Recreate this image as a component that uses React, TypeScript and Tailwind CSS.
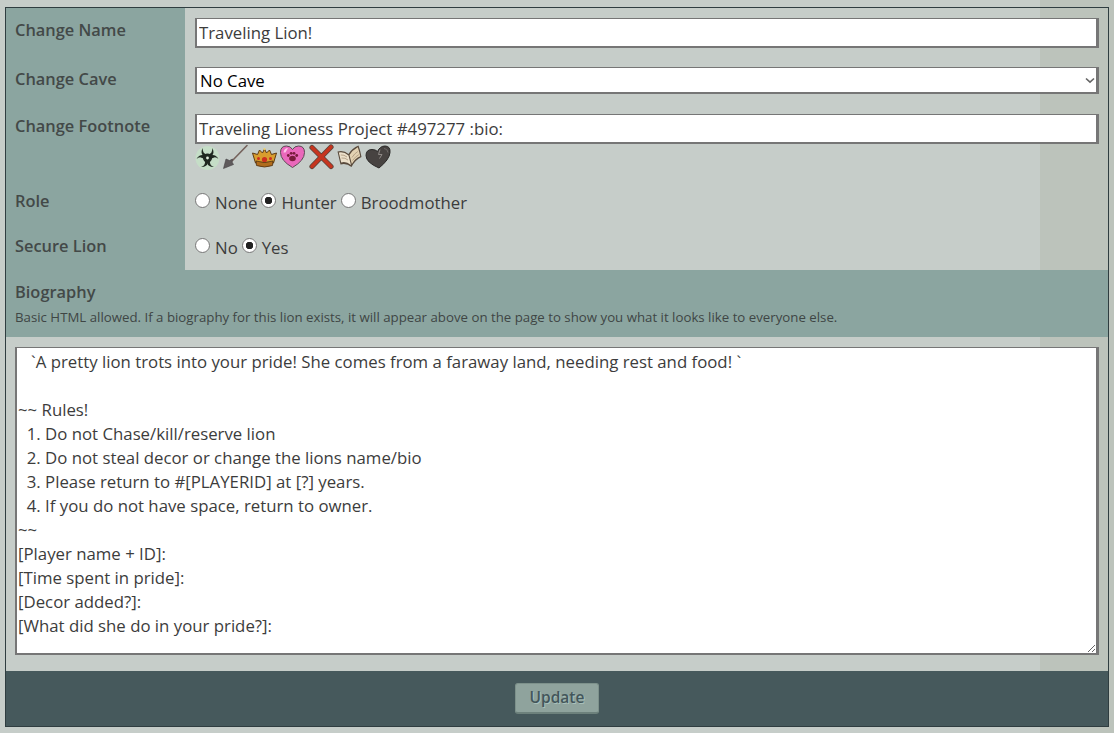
import React from 'react';

const font = { fontFamily: '"Open Sans", sans-serif' };

const bio = `   \`A pretty lion trots into your pride! She comes from a faraway land, needing rest and food! \`

~~ Rules!
  1. Do not Chase/kill/reserve lion
  2. Do not steal decor or change the lions name/bio
  3. Please return to #[PLAYERID] at [?] years.
  4. If you do not have space, return to owner.
~~
[Player name + ID]:
[Time spent in pride]:
[Decor added?]:
[What did she do in your pride?]:`;

const Bio = () => (
    <svg width="25" height="26" viewBox="0 0 25 26">
        <circle cx="12.500" cy="14" r="12" fill="#c4e6c6" opacity="0.65" />
        {[0, 120, 240].map((a) => (
            <path
                key={a}
                transform={`rotate(${a} 12.500 14)`}
                d="M8 4 A6 6 0 1 0 17 4 A4.800 4.800 0 1 1 8 4Z"
                fill="#1f2820"
            />
        ))}
        <circle cx="12.500" cy="14" r="3.800" fill="none" stroke="#1f2820" strokeWidth="1.400" />
        <circle cx="12.500" cy="14" r="1.400" fill="#e3f0e0" />
    </svg>
);

const Spear = () => (
    <svg width="25" height="26" viewBox="0 0 25 26">
        <path d="M9 17 L24 1.500" stroke="#75625c" strokeWidth="1.600" strokeLinecap="round" />
        <path d="M0.500 24.500 L3 15 L6.500 16.500 L9.500 15 L9 18 L10.500 20.500 Z" fill="#5f5a5c" stroke="#454144" strokeWidth="0.600" />
    </svg>
);

const Crown = () => (
    <svg width="25" height="26" viewBox="0 0 25 26">
        <path d="M3.500 19 L0.500 9 L5.500 10.500 L7.500 6 L10.500 9 L12.500 5 L14.500 9 L17.500 6 L19.500 10.500 L24.500 9 L21.500 19 Z" fill="#d89d2e" stroke="#5e3a12" strokeWidth="1" />
        <path d="M4 17 Q12.500 20 21 17 L20.500 21.500 Q12.500 24.500 4.500 21.500Z" fill="#b06c1c" stroke="#4e2f10" strokeWidth="0.800" />
        <circle cx="12.500" cy="15.500" r="2.600" fill="#cc2f1f" />
        <circle cx="6.500" cy="14.500" r="1.500" fill="#cc2f1f" />
        <circle cx="18.500" cy="14.500" r="1.500" fill="#cc2f1f" />
        <circle cx="12.500" cy="5" r="1.100" fill="#f2d36b" />
    </svg>
);

const Heart = () => (
    <svg width="25" height="26" viewBox="0 0 25 26">
        <path d="M12.500 23.500 Q0.500 16.500 0.500 8.500 Q0.500 2 6.500 2 Q10.500 2 12.500 5.500 Q14.500 2 18.500 2 Q24.500 2 24.500 8.500 Q24.500 16.500 12.500 23.500Z" fill="#ea68bb" stroke="#5c4a54" strokeWidth="1" />
        <path d="M3.500 8.500 Q4 4 8 4 L5.500 8.500Z" fill="#fcc6e8" />
        <ellipse cx="12.500" cy="14.500" rx="3.300" ry="2.800" fill="#7a1c3c" />
        <circle cx="8.300" cy="11.500" r="1.400" fill="#7a1c3c" />
        <circle cx="11.200" cy="9.300" r="1.400" fill="#7a1c3c" />
        <circle cx="14" cy="9.300" r="1.400" fill="#7a1c3c" />
        <circle cx="16.700" cy="11.500" r="1.400" fill="#7a1c3c" />
    </svg>
);

const Cross = () => (
    <svg width="25" height="26" viewBox="0 0 25 26">
        <path d="M3 3.500 L22 22.500 M22 3 L3 22.500" stroke="#5a453c" strokeWidth="5.200" strokeLinecap="round" />
        <path d="M3 3.500 L22 22.500 M22 3 L3 22.500" stroke="#c6351f" strokeWidth="3.600" strokeLinecap="round" />
    </svg>
);

const Book = () => (
    <svg width="25" height="26" viewBox="0 0 25 26">
        <path d="M0.500 7.500 Q7 6 11.500 10 Q15 4 21.500 1.500 Q23.500 7 24.500 13 Q18 16 14.500 23 Q9 18.500 3.500 20.500Z" fill="#5a4b3d" />
        <path d="M1.800 8.500 Q7 7.500 11.500 11.500 L14 21 Q9 17 4.200 18.500Z" fill="#ece0ca" />
        <path d="M12.500 11 Q15.500 6 20.800 3.200 Q22.300 7.500 23.200 12.300 Q18 14.500 14.800 20Z" fill="#e3d2b2" />
        <path d="M15 13.500 Q17.500 9.500 20.800 7.500 M15.500 16.500 Q18.500 12.500 21.800 10.700 M3.800 11 Q7 10.500 10 13 M4.500 14 Q8 13.500 11 16" stroke="#a8947a" strokeWidth="0.800" fill="none" />
    </svg>
);

const BrokenHeart = () => (
    <svg width="26" height="26" viewBox="0 0 26 26">
        <path d="M14 24 Q1 18.500 1 11.500 Q1 5.500 7 5.500 Q10.500 5.500 12.500 7.500 Q15 2 20 2 Q25.500 2 25 8.500 Q24.500 15.500 14 24Z" fill="#474341" stroke="#2a2827" strokeWidth="1" />
        <path d="M15 5.500 L13.500 10.500 L17 10.500 L14.500 14.500" stroke="#8f8a87" strokeWidth="1" fill="none" />
        <path d="M19 4.500 Q22.500 4.500 23 8.500" stroke="#6f6b69" strokeWidth="1" fill="none" />
    </svg>
);

const radio =
    "appearance-none w-[15px] h-[15px] rounded-full border border-[#767676] bg-white checked:bg-[radial-gradient(circle,#222_0,#222_3.5px,#fff_4px)] relative top-[-3px]";

const labelCell = "-mt-[10px] w-[179px] shrink-0 bg-[#8ba5a0] pl-[9px] text-[16.4px] font-semibold leading-[24px] text-[#434948]";

const Row = ({ label, rowClass, labelClass = "pt-[10px]", children }: { label: string; rowClass: string; labelClass?: string; children: React.ReactNode }) => (
    <div className={`flex pt-[10px] ${rowClass}`}>
        <div className={`${labelCell} ${labelClass}`}>{label}</div>
        <div className="flex-1 pl-[10px] pr-[9px]">{children}</div>
    </div>
);

const textInput =
    "block h-[30px] w-full border-2 border-[#767676] border-r-[3px] border-t-[1px] bg-white px-[2px] text-[16.8px] text-[#3c3c3c] outline-none";

export default function App() {
    return (
        <div
            style={font}
            className="h-[733px] w-[1114px] overflow-hidden bg-[linear-gradient(to_right,#c6cdc9_1040px,#bcc3bb_1040px)] px-[5px] pt-[7px]"
        >
            <div className="h-[720px] border border-[#2f3d40] text-[#3c3c3c]">
                <Row label="Change Name" rowClass="h-[49px]">
                    <input className={textInput} defaultValue="Traveling Lion!" />
                </Row>
                <Row label="Change Cave" rowClass="h-[47px]">
                    <div className="relative">
                        <select className="block h-[27px] w-full appearance-none border-2 border-[#767676] border-r-[3px] border-t-[1px] bg-white pl-[3px] text-[16.8px] text-black outline-none">
                            <option>No Cave</option>
                        </select>
                        <svg className="absolute right-[4px] top-[10px]" width="10" height="7" viewBox="0 0 10 7">
                            <path d="M1 1.500 L5 5.200 L9 1.500" stroke="#666" strokeWidth="1.600" fill="none" />
                        </svg>
                    </div>
                </Row>
                <Row label="Change Footnote" rowClass="h-[76px]">
                    <input className={textInput} defaultValue="Traveling Lioness Project #497277 :bio:" />
                    <div className="flex items-center gap-[3.400px]">
                        <Bio />
                        <Spear />
                        <Crown />
                        <Heart />
                        <Cross />
                        <Book />
                        <BrokenHeart />
                    </div>
                </Row>
                <Row label="Role" rowClass="h-[45px]" labelClass="pt-[9px]">
                    <div className="flex items-center gap-[4px] pt-[1px] text-[16.8px] leading-[24px]">
                        <input type="radio" name="role" className={radio} />
                        <span className="pl-[1px]">None</span>
                        <input type="radio" name="role" defaultChecked className={radio} />
                        <span className="pl-[1px]">Hunter</span>
                        <input type="radio" name="role" className={radio} />
                        <span className="pl-[1px]">Broodmother</span>
                    </div>
                </Row>
                <Row label="Secure Lion" rowClass="h-[45px]" labelClass="pt-[9px]">
                    <div className="flex items-center gap-[4px] pt-[1px] text-[16.8px] leading-[24px]">
                        <input type="radio" name="secure" className={radio} />
                        <span className="pl-[1px]">No</span>
                        <input type="radio" name="secure" defaultChecked className={radio} />
                        <span className="pl-[1px]">Yes</span>
                    </div>
                </Row>
                <div className="h-[67px] bg-[#8ba5a0] px-[9px] pt-[10px]">
                    <div className="text-[16.4px] font-semibold leading-[24px] text-[#434948]">Biography</div>
                    <div className="pt-[4px] text-[13.25px] leading-[18px] text-[#3f4645]">
                        Basic HTML allowed. If a biography for this lion exists, it will appear above on the page to show you what it looks like to everyone else.
                    </div>
                </div>
                <div className="h-[334px] pl-[9px] pr-[9px] pt-[10px]">
                    <textarea
                        className="block h-[308px] w-full border-2 border-[#767676] border-r-[3px] border-t-[1px] bg-white pl-[1px] pr-[2px] pt-[2px] text-[16.8px] leading-[24px] text-[#3c3c3c] outline-none"
                        defaultValue={bio}
                    />
                </div>
                <div className="flex h-[55px] items-center justify-center bg-[#46595c]">
                    <button className="h-[31px] w-[84px] rounded-[3px] border border-[#7d918b] border-b-[2px] border-b-[#6d817c] bg-[#8fa39d] text-[15.5px] font-semibold text-[#43565a] [text-shadow:1px_1px_0_#a9c0ba]">
                        Update
                    </button>
                </div>
            </div>
        </div>
    );
}
